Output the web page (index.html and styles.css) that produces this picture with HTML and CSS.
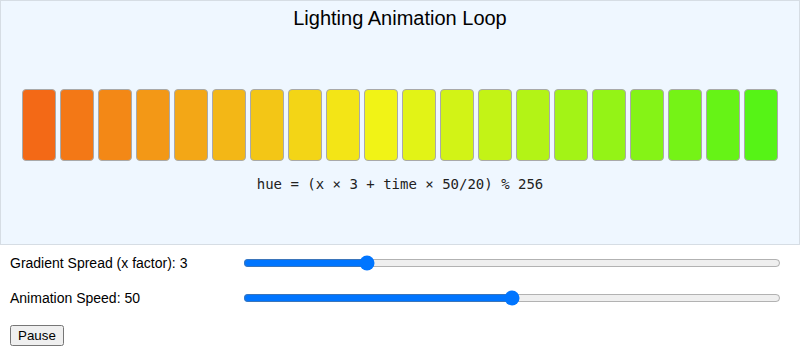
FILE: index.html
```html
<!DOCTYPE html>
<html lang="en">
<head>
    <meta charset="UTF-8">
    <meta name="viewport" content="width=device-width, initial-scale=1.0">
    <title>Lighting Animation Loop</title>
    <link rel="stylesheet" href="styles.css">
</head>
<body>
    <div class="panel">
        <h2 class="title">Lighting Animation Loop</h2>
        <div class="strip">
            <div class="led" style="background: hsl(22.5, 90%, 52%)"></div>
            <div class="led" style="background: hsl(26.7, 90%, 52%)"></div>
            <div class="led" style="background: hsl(30.9, 90%, 52%)"></div>
            <div class="led" style="background: hsl(35.2, 90%, 52%)"></div>
            <div class="led" style="background: hsl(39.4, 90%, 52%)"></div>
            <div class="led" style="background: hsl(43.6, 90%, 52%)"></div>
            <div class="led" style="background: hsl(47.8, 90%, 52%)"></div>
            <div class="led" style="background: hsl(52.0, 90%, 52%)"></div>
            <div class="led" style="background: hsl(56.3, 90%, 52%)"></div>
            <div class="led" style="background: hsl(60.5, 90%, 52%)"></div>
            <div class="led" style="background: hsl(64.7, 90%, 52%)"></div>
            <div class="led" style="background: hsl(68.9, 90%, 52%)"></div>
            <div class="led" style="background: hsl(73.1, 90%, 52%)"></div>
            <div class="led" style="background: hsl(77.3, 90%, 52%)"></div>
            <div class="led" style="background: hsl(81.6, 90%, 52%)"></div>
            <div class="led" style="background: hsl(85.8, 90%, 52%)"></div>
            <div class="led" style="background: hsl(90.0, 90%, 52%)"></div>
            <div class="led" style="background: hsl(94.2, 90%, 52%)"></div>
            <div class="led" style="background: hsl(98.4, 90%, 52%)"></div>
            <div class="led" style="background: hsl(102.7, 90%, 52%)"></div>
        </div>
        <div class="formula">hue = (x × 3 + time × 50/20) % 256</div>
    </div>

    <div class="controls">
        <div class="row">
            <label for="spread">Gradient Spread (x factor): 3</label>
            <input type="range" id="spread" min="1" max="10" value="3">
        </div>
        <div class="row">
            <label for="speed">Animation Speed: 50</label>
            <input type="range" id="speed" min="0" max="100" value="50">
        </div>
        <button class="toggle">Pause</button>
    </div>
</body>
</html>
```

FILE: styles.css
```css
*{
    box-sizing: border-box;
}
body{
    margin: 0;
    font-family: "Liberation Sans", Arial, sans-serif;
    color: #000;
    background: #fff;
}
.panel{
    height: 245px;
    padding: 6px 21px 0;
    background: #eff7ff;
    border: 1px solid #d6dde4;
}
.title{
    margin: 0;
    font-size: 20px;
    font-weight: normal;
    text-align: center;
    line-height: 23px;
}
.strip{
    display: flex;
    gap: 4px;
    margin-top: 59px;
}
.led{
    width: 34px;
    height: 72px;
    border: 1px solid #a9a9a9;
    border-radius: 4px;
}
.formula{
    margin-top: 15px;
    font-family: "DejaVu Sans Mono", monospace;
    font-size: 14px;
    line-height: 17px;
    text-align: center;
    color: #222;
}
.controls{
    padding: 10px 19px 10px 10px;
}
.row{
    display: flex;
    align-items: center;
    height: 16px;
    margin-bottom: 19px;
}
.row label{
    width: 233px;
    font-size: 14px;
}
.row input{
    flex: 1;
    margin: 0;
    height: 16px;
}
.toggle{
    font-family: "Liberation Sans", Arial, sans-serif;
    font-size: 13.33px;
    margin: 0;
}
```
